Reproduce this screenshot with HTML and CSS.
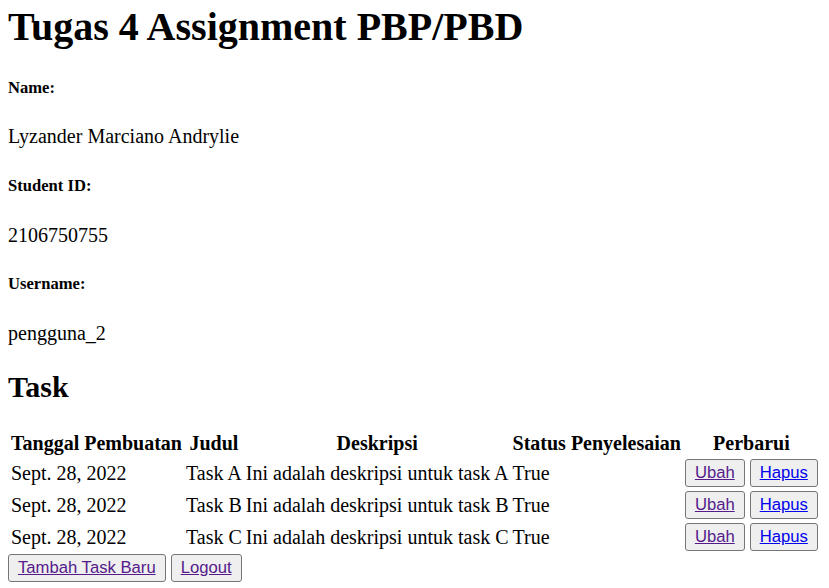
FILE: index.html
```html
<!DOCTYPE html>
<html>
<head>
<meta charset="utf-8">
<title>Tugas 4</title>
<link rel="stylesheet" href="styles.css">
</head>
<body class="page">
<h1 class="title">Tugas 4 Assignment PBP/PBD</h1>
<h5 class="label">Name:</h5>
<p class="value">Lyzander Marciano Andrylie</p>
<h5 class="label">Student ID:</h5>
<p class="value">2106750755</p>
<h5 class="label">Username:</h5>
<p class="value">pengguna_2</p>
<h2 class="section">Task</h2>
<table class="tasks">
<tr>
<th>Tanggal Pembuatan</th>
<th>Judul</th>
<th>Deskripsi</th>
<th>Status Penyelesaian</th>
<th>Perbarui</th>
</tr>
<tr>
<td>Sept. 28, 2022</td>
<td>Task A</td>
<td>Ini adalah deskripsi untuk task A</td>
<td>True</td>
<td class="actions"><button class="btn"><a class="link visited" href="#">Ubah</a></button> <button class="btn"><a class="link" href="#">Hapus</a></button></td>
</tr>
<tr>
<td>Sept. 28, 2022</td>
<td>Task B</td>
<td>Ini adalah deskripsi untuk task B</td>
<td>True</td>
<td class="actions"><button class="btn"><a class="link visited" href="#">Ubah</a></button> <button class="btn"><a class="link" href="#">Hapus</a></button></td>
</tr>
<tr>
<td>Sept. 28, 2022</td>
<td>Task C</td>
<td>Ini adalah deskripsi untuk task C</td>
<td>True</td>
<td class="actions"><button class="btn"><a class="link visited" href="#">Ubah</a></button> <button class="btn"><a class="link" href="#">Hapus</a></button></td>
</tr>
</table>
<button class="btn"><a class="link visited" href="#">Tambah Task Baru</a></button>
<button class="btn"><a class="link visited" href="#">Logout</a></button>
</body>
</html>
```
FILE: styles.css
```css
.page {
  margin: 3px 8px 8px;
  font-family: "Liberation Serif", "Times New Roman", serif;
  font-size: 20px;
  color: #000;
  background: #fff;
}
.title {
  font-size: 40px;
  margin: 0 0 26.8px;
}
.label {
  font-size: 16.6px;
  margin: 27.7px 0;
}
.value {
  margin: 20px 0;
}
.section {
  font-size: 30px;
  margin: 25px 0;
}
.tasks {
  border-spacing: 2px;
  font-size: 20px;
}
.tasks th, .tasks td {
  padding: 1px;
}
.btn {
  font-family: "Liberation Sans", Arial, sans-serif;
  font-size: 16.67px;
  padding: 3px 9px;
  border: 1px solid #767676;
  border-radius: 3px;
  background: #efefef;
}
.link {
  color: #0000ee;
  text-decoration: underline;
}
.link.visited {
  color: #551a8b;
}
```
